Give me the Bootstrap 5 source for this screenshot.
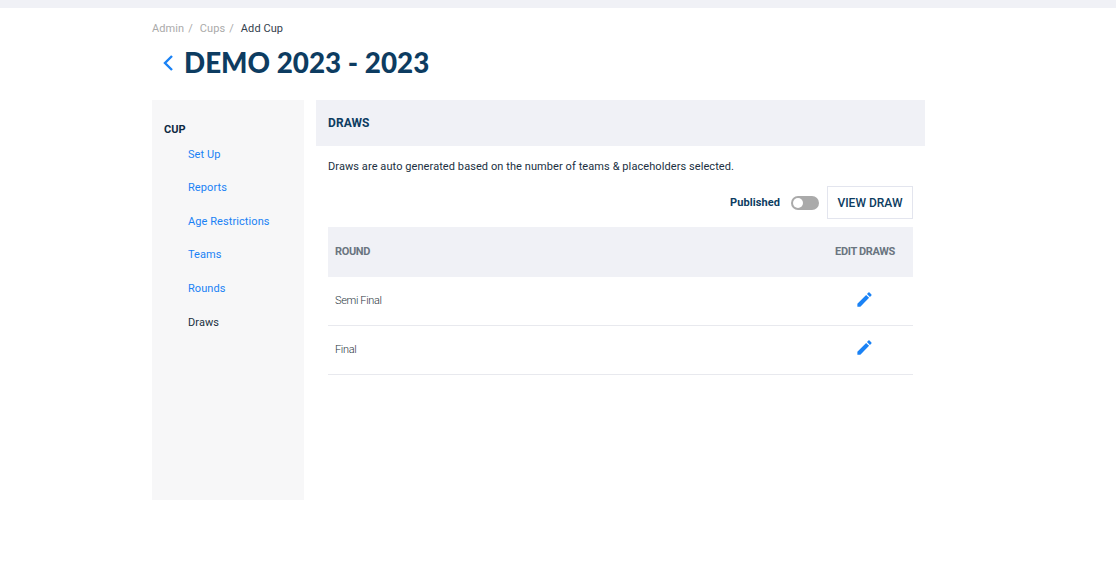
<!DOCTYPE html>
<html lang="en">
<head>
  <meta charset="UTF-8" />
  <title>Add Cup</title>
  <meta name="viewport" content="width=device-width, initial-scale=1">
  <link href="https://cdn.jsdelivr.net/npm/bootstrap@5.3.2/dist/css/bootstrap.min.css" rel="stylesheet">
  <style>
    body { font-family: Roboto, sans-serif; font-size: 11px; letter-spacing: .08px; color: #0f2a43; background: #fff; }
    a { text-decoration: none; }
    .top-strip { height: 8px; background: #f0f1f6; }
    .page-wrap { width: 773px; margin-left: 152px; }
    .crumbs { height: 40px; padding-top: 14px; font-size: 11px; line-height: 13px; }
    .crumbs a { color: #aaa; }
    .crumbs i { font-style: normal; color: #aaa; margin: 0 7px 0 4px; }
    .crumbs span { color: #33404d; }
    .page-head { height: 52px; padding: 0 0 22px 10px; gap: 10px; }
    .page-head h1 { font-family: Lato, sans-serif; font-weight: 900; font-size: 27.8px; color: #0d3c61; margin: 0; letter-spacing: 0; }
    .side-col { width: 152px; height: 400px; background: #f7f7f8; padding: 23px 12px 0; }
    .side-title { font-size: 11px; font-weight: 700; line-height: 13px; color: #0f2a43; }
    .side-links { margin-top: 1.7px; }
    .side-links a { display: block; margin-left: 24px; height: 33.6px; line-height: 33.6px; color: #1a82f5; font-size: 11px; }
    .side-links a.current { color: #20303f; }
    .main-col { width: 609px; }
    .main-head { height: 46px; background: #f0f1f6; padding: 0 12px; font-size: 12px; font-weight: 700; color: #0d3c61; }
    .main-body { padding: 0 12px; }
    .intro { height: 40px; line-height: 41px; margin: 0; color: #20303f; }
    .pub-row { height: 33px; margin-bottom: 8px; }
    .pub-label { font-weight: 700; color: #0d3c61; margin-right: 11px; padding-top: 1px; }
    .pub-switch { width: 28px; height: 14px; border-radius: 7px; background: #aaa; margin-right: 8px; padding: 2px 0 0 2px; }
    .pub-switch b { display: block; width: 10px; height: 10px; border-radius: 50%; background: #fff; }
    .view-btn { width: 86px; height: 33px; padding: 0; border: 1px solid #e3e5ee; border-radius: 0; background: #fff; color: #0d3c61; font-size: 12px; font-weight: 500; }
    .draws-table { margin: 0; table-layout: fixed; }
    .draws-table th { height: 50px; background: #f0f1f6; color: #6a7580; font-size: 11px; font-weight: 700; letter-spacing: -.35px; vertical-align: middle; padding: 0 7px; border: 0; box-shadow: none; }
    .draws-table td { height: 48.6px; vertical-align: middle; padding: 0 7px; font-size: 11px; font-weight: 300; letter-spacing: -.35px; color: #2a3540; border-bottom: 1px solid #e8e9ee; }
    .edit-col { width: 98px; text-align: center; }
    .draws-table th.edit-col { padding: 0 0 0 2px; }
    .edit-col svg { display: block; margin: -4px auto 0; }
  </style>
</head>
<body>
  <div class="top-strip"></div>
  <div class="page-wrap">
    <div class="crumbs"><a href="#">Admin</a><i>/</i><a href="#">Cups</a><i>/</i><span>Add Cup</span></div>
    <div class="page-head d-flex align-items-center">
      <svg width="12" height="18" viewBox="0 0 12 18"><path d="M10 2 3 9l7 7" fill="none" stroke="#1a82f5" stroke-width="2.4"/></svg>
      <h1>DEMO 2023 - 2023</h1>
    </div>
    <div class="d-flex gap-2 justify-content-between">
      <div class="side-col">
        <div class="side-title">CUP</div>
        <div class="side-links">
          <a href="#">Set Up</a>
          <a href="#">Reports</a>
          <a href="#">Age Restrictions</a>
          <a href="#">Teams</a>
          <a href="#">Rounds</a>
          <a href="#" class="current">Draws</a>
        </div>
      </div>
      <div class="main-col">
        <div class="main-head d-flex align-items-center">DRAWS</div>
        <div class="main-body">
          <p class="intro">Draws are auto generated based on the number of teams &amp; placeholders selected.</p>
          <div class="pub-row d-flex justify-content-end align-items-center">
            <span class="pub-label">Published</span>
            <div class="pub-switch"><b></b></div>
            <button class="btn view-btn">VIEW DRAW</button>
          </div>
          <table class="table draws-table">
            <thead><tr><th>ROUND</th><th class="edit-col">EDIT DRAWS</th></tr></thead>
            <tbody>
              <tr><td>Semi Final</td><td class="edit-col"><svg width="19" height="19" viewBox="0 0 24 24"><path fill="#1a82f5" d="M3 17.25V21h3.75L17.81 9.94l-3.75-3.75L3 17.25zM20.71 7.04a1 1 0 0 0 0-1.41l-2.34-2.34a1 1 0 0 0-1.41 0l-1.83 1.83 3.75 3.75 1.83-1.83z"/></svg></td></tr>
              <tr><td>Final</td><td class="edit-col"><svg width="19" height="19" viewBox="0 0 24 24"><path fill="#1a82f5" d="M3 17.25V21h3.75L17.81 9.94l-3.75-3.75L3 17.25zM20.71 7.04a1 1 0 0 0 0-1.41l-2.34-2.34a1 1 0 0 0-1.41 0l-1.83 1.83 3.75 3.75 1.83-1.83z"/></svg></td></tr>
            </tbody>
          </table>
        </div>
      </div>
    </div>
  </div>
  <script src="https://cdn.jsdelivr.net/npm/bootstrap@5.3.2/dist/js/bootstrap.bundle.min.js"></script>
</body>
</html>
